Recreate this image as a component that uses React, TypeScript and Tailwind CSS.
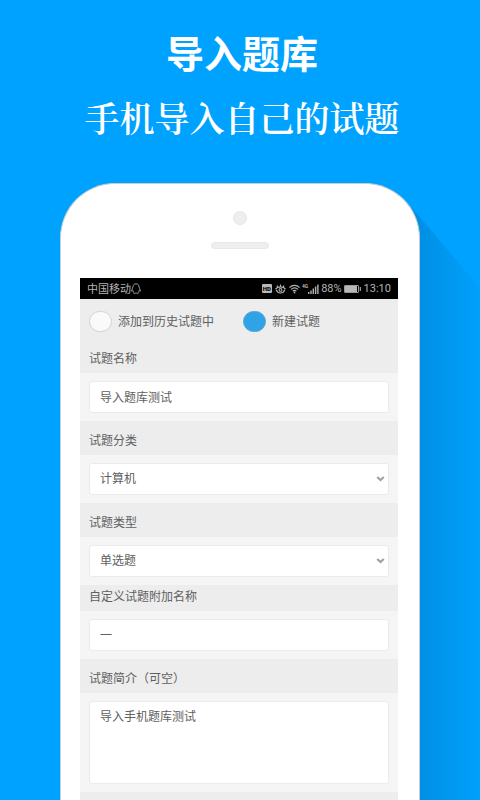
import { useState, type ReactNode } from "react";

const categories = ["计算机", "英语", "数学"];
const types = ["单选题", "多选题", "判断题"];

const boxClass =
  "block w-full rounded-[3px] border border-[#ebebeb] bg-white px-[10px] text-xs text-[#606060] outline-none";

function Chevron() {
  return (
    <svg
      className="pointer-events-none absolute right-[4px] top-[12px]"
      width="9"
      height="8"
      viewBox="0 0 9 8"
      fill="none"
      stroke="#a2a2a2"
      strokeWidth="2.2"
      aria-hidden="true"
    >
      <path d="M1.2 2 L4.5 5 L7.8 2" />
    </svg>
  );
}

function StatusBar() {
  return (
    <div className="flex h-[21px] items-center justify-between bg-black pl-[7px] pr-[7px] text-[11px] leading-none text-[#b4b4b4]">
      <div className="flex items-center">
        <span>中国移动</span>
        {/* QQ */}
        <svg width="10" height="11" viewBox="0 0 10 11" fill="none" stroke="#aaa" strokeWidth="0.9">
          <path d="M5 0.8C3 0.8 2 2.2 2 3.8C2 5 0.6 6.3 0.6 8C0.8 8.6 1.4 8.2 1.8 7.6C2 8.4 2.3 8.8 2.8 9.2C2.2 9.7 2.4 10.4 3.3 10.4C4.2 10.4 4.6 10.1 5 9.8C5.4 10.1 5.8 10.4 6.7 10.4C7.6 10.4 7.8 9.7 7.2 9.2C7.7 8.8 8 8.4 8.2 7.6C8.6 8.2 9.2 8.6 9.4 8C9.4 6.3 8 5 8 3.8C8 2.2 7 0.8 5 0.8Z" />
        </svg>
      </div>
      <div className="flex items-center gap-[2px] font-[Roboto,'Liberation_Sans',sans-serif]">
        <span className="flex h-[9px] w-[10px] items-center justify-center rounded-[1px] bg-[#b8b8b8] text-[6px] font-black text-black">
          HD
        </span>
        <svg className="ml-px" width="11" height="10" viewBox="0 0 11 10" fill="none" stroke="#b4b4b4" strokeWidth="1.1">
          <path d="M0.4 5.2C1.8 3.6 3.4 2.9 5.5 2.9S9.2 3.6 10.6 5.2M1.2 5.8C2 8 3.6 9 5.5 9S9 8 9.8 5.8" />
          <circle cx="5.5" cy="5.9" r="1.4" />
          <path d="M5.5 2.8V0.6M2.7 3L1.9 1.5M8.3 3L9.1 1.5" />
        </svg>
        <svg className="ml-px" width="11" height="10" viewBox="0 0 12 10" fill="none" stroke="#b4b4b4" strokeWidth="1.3">
          <path d="M0.5 3.6C3.6 0.3 8.4 0.3 11.5 3.6M2.3 5.5C4.4 3.3 7.6 3.3 9.7 5.5M4 7.3C5.1 6.2 6.9 6.2 8 7.3" />
          <circle cx="6" cy="8.8" r="1" fill="#b4b4b4" stroke="none" />
        </svg>
        <div className="flex items-end">
          <span className="self-start text-[5px] font-bold">4G</span>
          <svg width="11" height="10" viewBox="0 0 11 10" fill="#b4b4b4">
            <path d="M0 8h1.4v2H0zM2.3 6.4h1.4V10H2.3zM4.6 4.6H6V10H4.6zM6.9 2.6h1.4V10H6.9zM9.2 0.6h1.4V10H9.2z" />
          </svg>
        </div>
        <span>88%</span>
        <svg width="17" height="8" viewBox="0 0 17 8" fill="none">
          <rect x="0.5" y="0.5" width="14" height="7" rx="0.5" stroke="#9a9a9a" />
          <rect x="1" y="1" width="12" height="6" fill="#b8b8b8" />
          <path d="M16.3 2V6" stroke="#b4b4b4" strokeWidth="1.1" />
        </svg>
        <span className="ml-px">13:10</span>
      </div>
    </div>
  );
}

interface FieldProps {
  id: string;
  label: string;
  compact?: boolean;
  children: ReactNode;
}

function Field({ id, label, compact = false, children }: FieldProps) {
  return (
    <div>
      <label
        htmlFor={id}
        className={`block bg-[#ededed] px-[9px] pb-[6px] text-xs leading-[18px] text-[#606060] ${
          compact ? "pt-[2px]" : "pt-[10px]"
        }`}
      >
        {label}
      </label>
      <div className="bg-[#f5f5f5] px-[9px] py-2">
        <div className="relative">{children}</div>
      </div>
    </div>
  );
}

const radioClass =
  "h-[21px] w-[23px] appearance-none rounded-full border border-[#d2d2d2] bg-[#fafafa] checked:border-[#55a5d6] checked:bg-[#30a2e6]";

export default function App() {
  const [mode, setMode] = useState("new");
  const [name, setName] = useState("导入题库测试");
  const [category, setCategory] = useState(categories[0]);
  const [type, setType] = useState(types[0]);
  const [extra, setExtra] = useState("一");
  const [intro, setIntro] = useState("导入手机题库测试");

  return (
    <main className="flex min-h-screen flex-col overflow-hidden bg-[#00a2ff] pt-[30px] font-['Noto_Sans_CJK_SC',sans-serif]">
      <header className="pl-1 text-center text-white">
        <h1 className="text-[38px] font-bold leading-[44px]">导入题库</h1>
        <p className="mt-[22px] font-['Noto_Serif_CJK_SC','Noto_Sans_CJK_SC',serif] text-[35px] font-semibold leading-[42px]">
          手机导入自己的试题
        </p>
      </header>

      <div className="relative mx-[60px] mt-[45px] flex grow flex-col">
        {/* 长阴影 */}
        <div className="absolute bottom-0 left-full top-[25px] -ml-2 w-[68px] bg-linear-to-r from-[#008ee2] to-[#00a0fc] [clip-path:polygon(0_0,100%_80px,100%_100%,0_100%)]" />

        <div className="relative flex grow flex-col rounded-t-[55px] border-x border-t border-[#c3ccd2] bg-white px-[19px] pt-[27px]">
          <div className="mx-auto size-[14px] rounded-full border border-[#e6e6e6] bg-[#eee]" />
          <div className="mx-auto mt-[17px] h-[7px] w-[58px] rounded-full border border-[#e8e8e8] bg-[#eee]" />

          <form className="mr-[2px] mt-[29px] flex grow flex-col" onSubmit={(e) => e.preventDefault()}>
            <StatusBar />

            <div className="flex h-10 items-center bg-[#ededed] px-[9px] pt-1 text-xs text-[#606060]">
              <label className="flex items-center gap-[6px]">
                <input
                  type="radio"
                  name="mode"
                  className={radioClass}
                  checked={mode === "history"}
                  onChange={() => setMode("history")}
                />
                添加到历史试题中
              </label>
              <label className="ml-[29px] flex items-center gap-[6px]">
                <input
                  type="radio"
                  name="mode"
                  className={radioClass}
                  checked={mode === "new"}
                  onChange={() => setMode("new")}
                />
                新建试题
              </label>
            </div>

            <Field id="name" label="试题名称">
              <input
                id="name"
                className={`${boxClass} h-8 pb-[2px]`}
                value={name}
                onChange={(e) => setName(e.target.value)}
              />
            </Field>

            <Field id="category" label="试题分类">
              <select
                id="category"
                className={`${boxClass} h-8 appearance-none pb-[2px]`}
                value={category}
                onChange={(e) => setCategory(e.target.value)}
              >
                {categories.map((c) => (
                  <option key={c}>{c}</option>
                ))}
              </select>
              <Chevron />
            </Field>

            <Field id="type" label="试题类型">
              <select
                id="type"
                className={`${boxClass} h-8 appearance-none pb-[2px]`}
                value={type}
                onChange={(e) => setType(e.target.value)}
              >
                {types.map((t) => (
                  <option key={t}>{t}</option>
                ))}
              </select>
              <Chevron />
            </Field>

            <Field id="extra" label="自定义试题附加名称" compact>
              <input
                id="extra"
                className={`${boxClass} h-8 pb-[2px]`}
                value={extra}
                onChange={(e) => setExtra(e.target.value)}
              />
            </Field>

            <Field id="intro" label="试题简介（可空）">
              <textarea
                id="intro"
                className={`${boxClass} h-[83px] resize-none pt-[5px] leading-[18px]`}
                value={intro}
                onChange={(e) => setIntro(e.target.value)}
              />
            </Field>

            <div className="min-h-2 grow bg-[#ededed]" />
          </form>
        </div>
      </div>
    </main>
  );
}
